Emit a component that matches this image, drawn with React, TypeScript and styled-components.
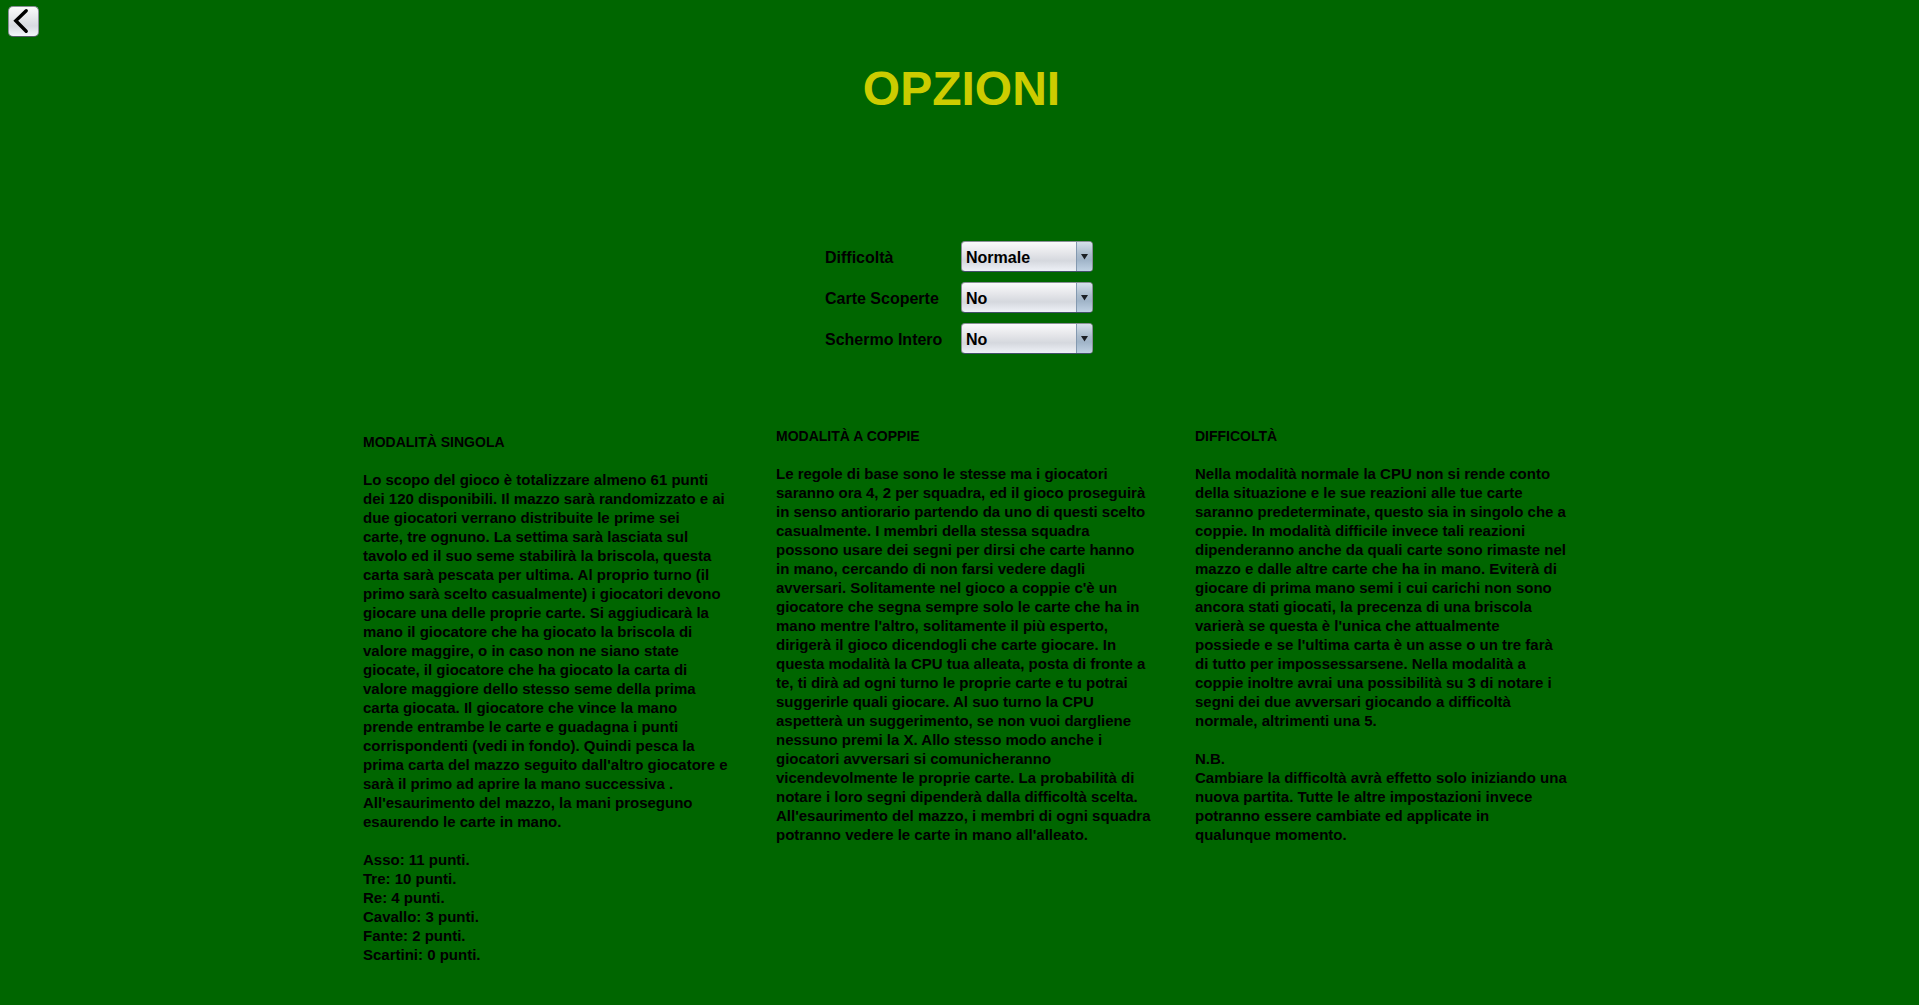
import React, { useId, useState } from "react";
import styled, { createGlobalStyle } from "styled-components";

const GlobalStyle = createGlobalStyle`
  *, *::before, *::after { box-sizing: border-box; }
  body {
    margin: 0;
    background: #006600;
    color: #000;
    font-family: "Liberation Sans", Arial, sans-serif;
    font-weight: 700;
  }
`;

const Page = styled.div`
  display: flex;
  flex-direction: column;
  min-height: 100vh;
`;

const TopBar = styled.nav`
  display: flex;
  padding: 6px 8px 0;
`;

const BackButton = styled.button`
  display: flex;
  align-items: center;
  justify-content: center;
  width: 31px;
  height: 31px;
  padding: 0;
  border: 1px solid #8a8f98;
  border-bottom-color: #555b68;
  border-radius: 5px;
  background: linear-gradient(#fbfbfc 0%, #e2e4e8 45%, #d8dbe1 65%, #f2f5fb 100%);
  cursor: pointer;
`;

const Title = styled.h1`
  margin: 23px 0 0;
  padding-left: 4px;
  font-size: 48px;
  line-height: 58px;
  text-align: center;
  color: #cccc00;
`;

const Options = styled.form`
  display: grid;
  grid-template-columns: 136px 132px;
  justify-content: center;
  align-items: center;
  row-gap: 10px;
  margin-top: 123px;
  padding-right: 1px;
`;

const OptionLabel = styled.label`
  padding-top: 2px;
  font-size: 16px;
  line-height: 19px;
`;

const SelectFrame = styled.div`
  display: grid;
  grid-template-columns: 1fr 16px;
  height: 31px;
  overflow: hidden;
  border: 1px solid #8a8f98;
  border-bottom-color: #43506a;
  border-radius: 4px;
  background: linear-gradient(#fafafb 0%, #e4e5e9 40%, #d5d8de 65%, #eef1f7 100%);
`;

const Select = styled.select`
  grid-area: 1 / 1 / 2 / 3;
  width: 100%;
  padding: 2px 20px 0 4px;
  border: 0;
  background: transparent;
  appearance: none;
  font: inherit;
  font-size: 16px;
  color: #000;
  outline-offset: -2px;
`;

const ArrowCell = styled.span`
  grid-area: 1 / 2 / 2 / 3;
  display: flex;
  align-items: center;
  justify-content: center;
  border-left: 1px solid #8399b0;
  background: linear-gradient(#d5e0ea 0%, #abbccd 42%, #a0b4c8 62%, #c0d2e4 100%);
  pointer-events: none;
`;

const Rules = styled.main`
  display: grid;
  grid-template-columns: 357px 363px 361px;
  justify-content: center;
  column-gap: 56px;
  margin-top: 73px;
`;

const Section = styled.section<{ $lowered?: boolean }>`
  padding-top: ${(p) => (p.$lowered ? 6 : 0)}px;
  line-height: 19px;
`;

const Heading = styled.h2`
  margin: 0 0 18px;
  font-size: 14px;
`;

const Text = styled.p`
  margin: 0 0 19px;
  font-size: 15px;
  white-space: pre;
`;

const CHOICES = [
  { label: "Difficoltà", values: ["Normale", "Difficile"] },
  { label: "Carte Scoperte", values: ["No", "Sì"] },
  { label: "Schermo Intero", values: ["No", "Sì"] },
];

const SECTIONS = [
  {
    title: "MODALITÀ SINGOLA",
    lowered: true,
    texts: [
      `Lo scopo del gioco è totalizzare almeno 61 punti
dei 120 disponibili. Il mazzo sarà randomizzato e ai
due giocatori verrano distribuite le prime sei
carte, tre ognuno. La settima sarà lasciata sul
tavolo ed il suo seme stabilirà la briscola, questa
carta sarà pescata per ultima. Al proprio turno (il
primo sarà scelto casualmente) i giocatori devono
giocare una delle proprie carte. Si aggiudicarà la
mano il giocatore che ha giocato la briscola di
valore maggire, o in caso non ne siano state
giocate, il giocatore che ha giocato la carta di
valore maggiore dello stesso seme della prima
carta giocata. Il giocatore che vince la mano
prende entrambe le carte e guadagna i punti
corrispondenti (vedi in fondo). Quindi pesca la
prima carta del mazzo seguito dall'altro giocatore e
sarà il primo ad aprire la mano successiva .
All'esaurimento del mazzo, la mani proseguno
esaurendo le carte in mano.`,
      `Asso: 11 punti.
Tre: 10 punti.
Re: 4 punti.
Cavallo: 3 punti.
Fante: 2 punti.
Scartini: 0 punti.`,
    ],
  },
  {
    title: "MODALITÀ A COPPIE",
    texts: [
      `Le regole di base sono le stesse ma i giocatori
saranno ora 4, 2 per squadra, ed il gioco proseguirà
in senso antiorario partendo da uno di questi scelto
casualmente. I membri della stessa squadra
possono usare dei segni per dirsi che carte hanno
in mano, cercando di non farsi vedere dagli
avversari. Solitamente nel gioco a coppie c'è un
giocatore che segna sempre solo le carte che ha in
mano mentre l'altro, solitamente il più esperto,
dirigerà il gioco dicendogli che carte giocare. In
questa modalità la CPU tua alleata, posta di fronte a
te, ti dirà ad ogni turno le proprie carte e tu potrai
suggerirle quali giocare. Al suo turno la CPU
aspetterà un suggerimento, se non vuoi dargliene
nessuno premi la X. Allo stesso modo anche i
giocatori avversari si comunicheranno
vicendevolmente le proprie carte. La probabilità di
notare i loro segni dipenderà dalla difficoltà scelta.
All'esaurimento del mazzo, i membri di ogni squadra
potranno vedere le carte in mano all'alleato.`,
    ],
  },
  {
    title: "DIFFICOLTÀ",
    texts: [
      `Nella modalità normale la CPU non si rende conto
della situazione e le sue reazioni alle tue carte
saranno predeterminate, questo sia in singolo che a
coppie. In modalità difficile invece tali reazioni
dipenderanno anche da quali carte sono rimaste nel
mazzo e dalle altre carte che ha in mano. Eviterà di
giocare di prima mano semi i cui carichi non sono
ancora stati giocati, la precenza di una briscola
varierà se questa è l'unica che attualmente
possiede e se l'ultima carta è un asse o un tre farà
di tutto per impossessarsene. Nella modalità a
coppie inoltre avrai una possibilità su 3 di notare i
segni dei due avversari giocando a difficoltà
normale, altrimenti una 5.`,
      `N.B.
Cambiare la difficoltà avrà effetto solo iniziando una
nuova partita. Tutte le altre impostazioni invece
potranno essere cambiate ed applicate in
qualunque momento.`,
    ],
  },
];

function Choice({ label, values }: { label: string; values: string[] }) {
  const id = useId();
  const [value, setValue] = useState(values[0]);
  return (
    <>
      <OptionLabel htmlFor={id}>{label}</OptionLabel>
      <SelectFrame>
        <Select id={id} value={value} onChange={(e) => setValue(e.target.value)}>
          {values.map((v) => (
            <option key={v}>{v}</option>
          ))}
        </Select>
        <ArrowCell>
          <svg width="7" height="6" viewBox="0 0 7 6" aria-hidden="true">
            <path d="M0 0H7L3.5 5.5Z" fill="#1b1f24" />
          </svg>
        </ArrowCell>
      </SelectFrame>
    </>
  );
}

export default function App() {
  return (
    <Page>
      <GlobalStyle />
      <TopBar>
        <BackButton type="button" aria-label="Indietro">
          <svg width="29" height="29" viewBox="0 0 29 29" aria-hidden="true">
            <path
              d="M17.2 3.8L6.8 13.8L17.2 24.2"
              fill="none"
              stroke="#000"
              strokeWidth="3.4"
              strokeLinecap="round"
              strokeLinejoin="miter"
            />
          </svg>
        </BackButton>
      </TopBar>
      <Title>OPZIONI</Title>
      <Options>
        {CHOICES.map((c) => (
          <Choice key={c.label} {...c} />
        ))}
      </Options>
      <Rules>
        {SECTIONS.map((s) => (
          <Section key={s.title} $lowered={s.lowered}>
            <Heading>{s.title}</Heading>
            {s.texts.map((t) => (
              <Text key={t}>{t}</Text>
            ))}
          </Section>
        ))}
      </Rules>
    </Page>
  );
}
